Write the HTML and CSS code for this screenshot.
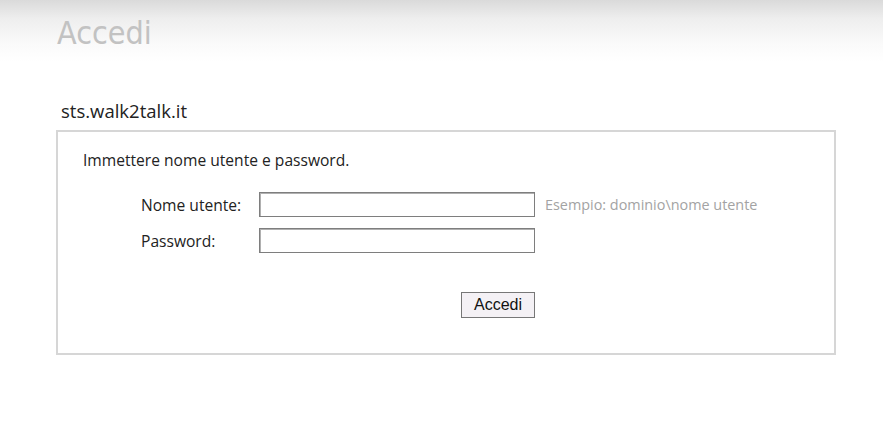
FILE: index.html
```html
<!DOCTYPE html>
<html lang="it">
<head>
    <meta charset="UTF-8">
    <meta name="viewport" content="width=device-width, initial-scale=1.0">
    <title>Accedi</title>
    <link rel="stylesheet" href="styles.css">
</head>
<body>
    <div class="header">
        <h1 class="title">Accedi</h1>
    </div>

    <div class="main">
        <div class="domain">sts.walk2talk.it</div>

        <div class="login-box">
            <p class="intro">Immettere nome utente e password.</p>

            <div class="login-form">
                <label for="username">Nome utente:</label>
                <input type="text" id="username">
                <span class="hint">Esempio: dominio\nome utente</span>

                <label for="password">Password:</label>
                <input type="password" id="password">
                <span></span>
            </div>

            <div class="actions">
                <button id="submit-btn">Accedi</button>
            </div>
        </div>
    </div>
</body>
</html>
```

FILE: styles.css
```css
body {
    font-family: 'Open Sans', 'Noto Sans', sans-serif;
    background-color: white;
    color: #222;
    margin: 0;
    padding: 0;
}

.header {
    height: 62px;
    background: linear-gradient(to bottom, #dadada 0%, #eeeeee 30%, #fafafa 70%, #ffffff 100%);
    padding-left: 57px;
    box-sizing: border-box;
}

.title {
    margin: 0;
    padding-top: 13px;
    font-family: 'DejaVu Sans Condensed', 'DejaVu Sans', sans-serif;
    font-weight: 200;
    font-size: 32px;
    line-height: 40px;
    color: #c2c2c2;
}

.main {
    padding: 37px 0 0 56px;
}

.domain {
    font-size: 18.5px;
    line-height: 24px;
    padding-left: 5px;
    color: #222;
    margin-bottom: 7px;
}

.login-box {
    width: 780px;
    height: 225px;
    box-sizing: border-box;
    border: 2px solid #d6d6d6;
    padding: 16px 0 0 25px;
}

.intro {
    margin: 0;
    font-size: 15.6px;
    line-height: 24px;
}

.login-form {
    display: grid;
    grid-template-columns: 118px 276px auto;
    row-gap: 11px;
    align-items: center;
    margin: 20px 0 0 58px;
}

.login-form label {
    font-size: 15.6px;
}

input {
    height: 25px;
    box-sizing: border-box;
    border: 1px solid #7e7e7e;
    box-shadow: inset 1px 1px 0 #b0b0b0;
    padding: 2px 4px;
    font-size: 14px;
    margin: 0;
}

.hint {
    padding-left: 10px;
    font-size: 14.4px;
    color: #a3a3a3;
}

.actions {
    margin: 39px 0 0 378px;
}

button {
    width: 74px;
    height: 26px;
    box-sizing: border-box;
    border: 1px solid #777;
    background-color: #f4f1f5;
    font-family: 'Liberation Sans', Arial, sans-serif;
    font-size: 16px;
    color: #111;
    padding: 0;
    border-radius: 0;
}
```
